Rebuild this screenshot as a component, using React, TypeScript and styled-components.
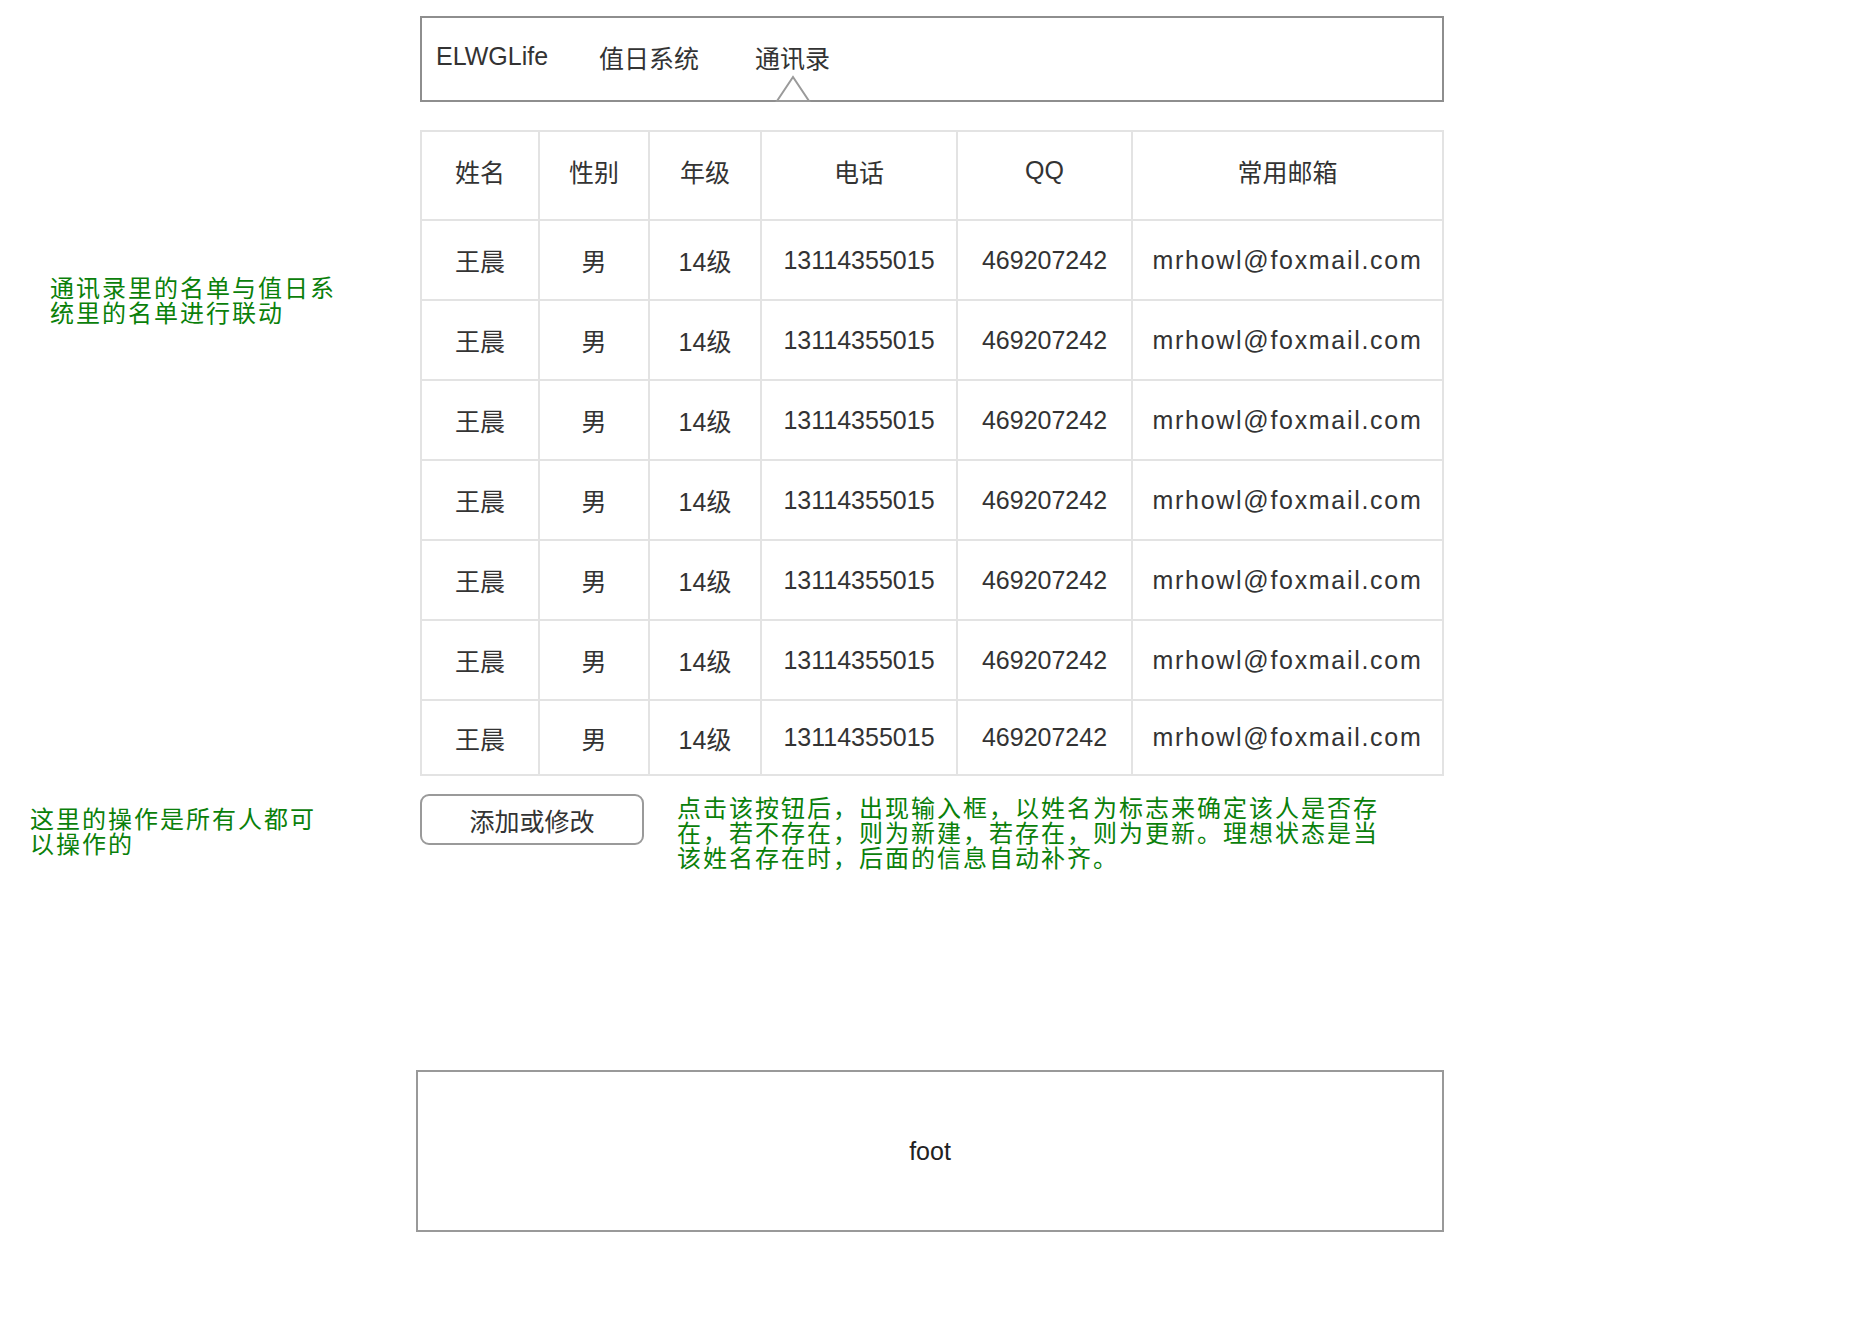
import React from "react";
import styled, { createGlobalStyle } from "styled-components";

const GlobalStyle = createGlobalStyle`
  html, body {
    margin: 0;
    padding: 0;
    background: #ffffff;
  }
  body {
    font-family: "Liberation Sans", "Noto Sans CJK SC", sans-serif;
    color: #333333;
  }
`;

const Page = styled.div`
  display: flex;
  flex-direction: column;
  width: 1868px;
  min-height: 1338px;
`;

const Section = styled.section<{ $mt: number }>`
  display: grid;
  grid-template-columns: 420px 1024px;
  align-items: start;
  margin-top: ${(p) => p.$mt}px;
`;

const Note = styled.div<{ $top: number; $left: number }>`
  padding-top: ${(p) => p.$top}px;
  padding-left: ${(p) => p.$left}px;
  font-family: "Noto Sans CJK SC", sans-serif;
  font-size: 24px;
  letter-spacing: 2px;
  line-height: 25px;
  color: #0a800a;
  white-space: nowrap;
`;

const HeaderBar = styled.header`
  box-sizing: border-box;
  height: 86px;
  border: 2px solid #8e8e8e;
  background: #fff;
  display: flex;
  align-items: stretch;
  padding-left: 14px;
  padding-bottom: 5px;
`;

const NavItem = styled.div<{ $ml: number }>`
  position: relative;
  display: flex;
  align-items: center;
  margin-left: ${(p) => p.$ml}px;
  font-family: "Liberation Sans", "Noto Sans CJK SC", sans-serif;
  font-size: 25px;
  color: #333;
  white-space: nowrap;
`;

const Indicator = styled.svg`
  position: absolute;
  left: 50%;
  bottom: -8px;
  transform: translateX(-50%);
`;

const Table = styled.table`
  width: 1022px;
  border-collapse: collapse;
  table-layout: fixed;
  font-family: "Liberation Sans", "Noto Sans CJK SC", sans-serif;
  font-size: 25px;
  color: #333;
`;

const HeadCell = styled.th`
  box-sizing: border-box;
  height: 89px;
  padding: 0 0 10px 0;
  border: 2px solid #e3e3e3;
  font-weight: normal;
  text-align: center;
  vertical-align: middle;
`;

const Cell = styled.td<{ $h: number; $ls?: number }>`
  height: ${(p) => p.$h}px;
  padding: 0;
  border: 2px solid #e3e3e3;
  text-align: center;
  vertical-align: middle;
  white-space: nowrap;
  letter-spacing: ${(p) => p.$ls ?? 0}px;
`;

const Actions = styled.div`
  display: flex;
  align-items: flex-start;
  gap: 33px;
`;

const Button = styled.button`
  box-sizing: border-box;
  width: 224px;
  height: 51px;
  border: 2px solid #9a9a9a;
  border-radius: 9px;
  background: #fff;
  font-family: "Noto Sans CJK SC", sans-serif;
  font-size: 25px;
  color: #333;
  padding: 0;
  cursor: pointer;
`;

const Footer = styled.footer`
  box-sizing: border-box;
  width: 1028px;
  height: 162px;
  margin-left: -4px;
  border: 2px solid #999;
  display: flex;
  align-items: center;
  justify-content: center;
  font-family: "Liberation Sans", sans-serif;
  font-size: 25px;
  color: #222;
`;

const columns = [118, 110, 112, 196, 175, 311];
const heads = ["姓名", "性别", "年级", "电话", "QQ", "常用邮箱"];

const rows = Array.from({ length: 7 }, () => ({
  name: "王晨",
  gender: "男",
  grade: "14级",
  phone: "13114355015",
  qq: "469207242",
  email: "mrhowl@foxmail.com",
}));

export default function App() {
  return (
    <>
      <GlobalStyle />
      <Page>
        <Section $mt={16}>
          <div />
          <HeaderBar>
            <NavItem $ml={0}>ELWGLife</NavItem>
            <NavItem $ml={51}>值日系统</NavItem>
            <NavItem $ml={56}>
              通讯录
              <Indicator width="36" height="28" viewBox="0 0 36 28">
                <polygon
                  points="2,26 18,2 34,26"
                  fill="#fff"
                  stroke="#9a9a9a"
                  strokeWidth="2"
                />
              </Indicator>
            </NavItem>
          </HeaderBar>
        </Section>

        <Section $mt={28}>
          <Note $top={144} $left={50}>
            通讯录里的名单与值日系
            <br />
            统里的名单进行联动
          </Note>
          <Table>
            <colgroup>
              {columns.map((w, i) => (
                <col key={i} style={{ width: w }} />
              ))}
            </colgroup>
            <thead>
              <tr>
                {heads.map((h) => (
                  <HeadCell key={h}>{h}</HeadCell>
                ))}
              </tr>
            </thead>
            <tbody>
              {rows.map((r, i) => {
                const h = i === rows.length - 1 ? 73 : 78;
                return (
                  <tr key={i}>
                    <Cell $h={h}>{r.name}</Cell>
                    <Cell $h={h}>{r.gender}</Cell>
                    <Cell $h={h}>{r.grade}</Cell>
                    <Cell $h={h}>{r.phone}</Cell>
                    <Cell $h={h}>{r.qq}</Cell>
                    <Cell $h={h} $ls={1.7}>
                      {r.email}
                    </Cell>
                  </tr>
                );
              })}
            </tbody>
          </Table>
        </Section>

        <Section $mt={18}>
          <Note $top={11} $left={30}>
            这里的操作是所有人都可
            <br />
            以操作的
          </Note>
          <Actions>
            <Button>添加或修改</Button>
            <Note $top={0} $left={0}>
              点击该按钮后，出现输入框，以姓名为标志来确定该人是否存
              <br />
              在，若不存在，则为新建，若存在，则为更新。理想状态是当
              <br />
              该姓名存在时，后面的信息自动补齐。
            </Note>
          </Actions>
        </Section>

        <Section $mt={201}>
          <div />
          <Footer>foot</Footer>
        </Section>
      </Page>
    </>
  );
}
